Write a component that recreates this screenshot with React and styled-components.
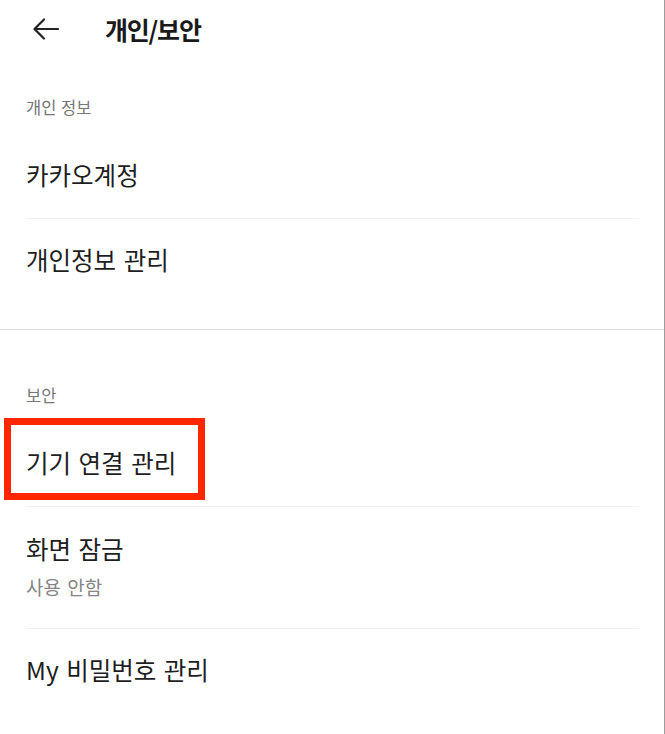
import React from "react";
import styled, { createGlobalStyle } from "styled-components";

const GlobalStyle = createGlobalStyle`
	html,
	body {
		margin: 0;
		padding: 0;
		background: #ffffff;
	}

	body {
		font-family: "Noto Sans CJK KR", "Noto Sans", sans-serif;
		color: #1e1e1e;
	}
`;

const Screen = styled.div`
	width: 664px;
	min-height: 100vh;
	border-right: 1px solid #9c9c9c;
	background: #ffffff;
`;

const Header = styled.header`
	display: flex;
	align-items: center;
	gap: 46px;
	height: 26px;
	padding: 16px 0 32px 33px;
`;

const BackButton = styled.button`
	display: flex;
	align-items: center;
	justify-content: center;
	width: 26px;
	height: 26px;
	padding: 0;
	border: none;
	background: none;
	color: #222222;
	cursor: pointer;
`;

const Title = styled.h1`
	margin: 0;
	font-size: 25px;
	font-weight: 700;
	letter-spacing: -1.2px;
	line-height: 26px;
	color: #1a1a1a;
`;

const Section = styled.section`
	padding: 23px 0 26px;
`;

const SectionLabel = styled.div`
	padding-left: 26px;
	margin-bottom: 17px;
	font-size: 16.5px;
	line-height: 20px;
	word-spacing: 1px;
	color: #767676;
`;

const Divider = styled.hr`
	height: 1px;
	margin: 0 0 32px;
	border: none;
	background: #dcdcdc;
`;

const Row = styled.div`
	position: relative;
	display: flex;
	flex-direction: column;
	justify-content: center;
	min-height: ${(p) => (p.$sub ? "121px" : "84px")};
	padding: 0 26px;
	box-sizing: border-box;
	cursor: pointer;
`;

const RowTitle = styled.div`
	font-size: 24.5px;
	line-height: 30px;
	word-spacing: 2px;
	color: #1e1e1e;
	margin-top: -2px;
`;

const RowSub = styled.div`
	margin-top: 11px;
	font-size: 19px;
	line-height: 24px;
	word-spacing: 2px;
	color: #858585;
`;

const Separator = styled.div`
	height: 1px;
	margin: 0 25px 0 26px;
	background: #f1f1f1;
`;

const Highlight = styled.div`
	position: absolute;
	top: -4px;
	left: 4px;
	width: 201px;
	height: 82px;
	box-sizing: border-box;
	border: 7px solid #ff2600;
	pointer-events: none;
`;

function ArrowLeft() {
	return (
		<svg width="26" height="22" viewBox="0 0 26 22" fill="none">
			<path
				d="M25 11H2M11 1.5L1.5 11L11 20.5"
				stroke="currentColor"
				strokeWidth="2.2"
				strokeLinecap="round"
				strokeLinejoin="round"
			/>
		</svg>
	);
}

const sections = [
	{
		label: "개인 정보",
		items: [{ title: "카카오계정" }, { title: "개인정보 관리" }],
	},
	{
		label: "보안",
		items: [
			{ title: "기기 연결 관리", marked: true },
			{ title: "화면 잠금", sub: "사용 안함" },
			{ title: "My 비밀번호 관리" },
		],
	},
];

function App() {
	return (
		<>
			<GlobalStyle />
			<Screen>
				<Header>
					<BackButton aria-label="뒤로">
						<ArrowLeft />
					</BackButton>
					<Title>개인/보안</Title>
				</Header>

				{sections.map((section, sIndex) => (
					<React.Fragment key={section.label}>
						{sIndex > 0 && <Divider />}
						<Section>
							<SectionLabel>{section.label}</SectionLabel>
							{section.items.map((item, iIndex) => (
								<React.Fragment key={item.title}>
									{iIndex > 0 && <Separator />}
									<Row $sub={!!item.sub}>
										<RowTitle>{item.title}</RowTitle>
										{item.sub && <RowSub>{item.sub}</RowSub>}
										{item.marked && <Highlight />}
									</Row>
								</React.Fragment>
							))}
						</Section>
					</React.Fragment>
				))}
			</Screen>
		</>
	);
}

export default App;
